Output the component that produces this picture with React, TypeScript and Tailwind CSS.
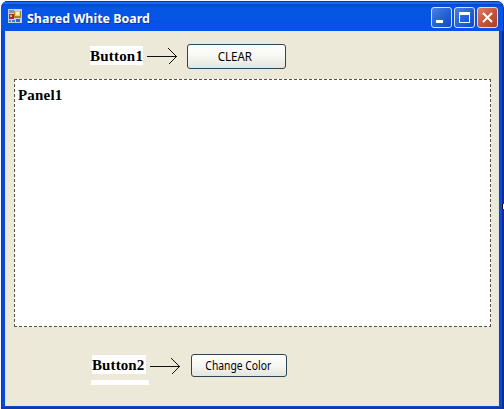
import React from "react";

function AppIcon() {
  return (
    <svg width="14" height="14" viewBox="0 0 14 14" shapeRendering="crispEdges" className="mt-[8px] ml-[4px] shrink-0">
      <rect width="14" height="14" fill="#c4cde2" />
      <rect x="1" y="1" width="5" height="3" fill="#8492ba" />
      <rect x="1" y="5" width="5" height="5" fill="#a52e2c" />
      <rect x="2" y="6" width="2" height="2" fill="#f0a58c" />
      <rect x="6" y="2" width="7" height="7" fill="#b78318" />
      <rect x="7" y="2" width="5" height="5" fill="#f9ce4b" />
      <rect x="8" y="3" width="3" height="3" fill="#fff0b4" />
      <rect x="1" y="11" width="2" height="2" fill="#557bc5" />
      <rect x="4" y="11" width="3" height="2" fill="#5276ba" />
      <rect x="8" y="10" width="4" height="3" fill="#3668c5" />
    </svg>
  );
}

function Caption({ close = false, children }: { close?: boolean; children: React.ReactNode }) {
  return (
    <button
      className={
        "flex h-[21px] w-[21px] shrink-0 items-center justify-center rounded-[3px] border border-[#d5e0fb] " +
        (close
          ? "bg-linear-to-br from-[#dc8068] via-[#c95439] to-[#ad3f25]"
          : "bg-linear-to-br from-[#4c7fe4] via-[#2463d8] to-[#1748c5]")
      }
    >
      <svg width="19" height="19" viewBox="0 0 19 19" fill="none" stroke="#fff">
        {children}
      </svg>
    </button>
  );
}

function Arrow() {
  return (
    <svg width="31" height="18" viewBox="0 0 31 18" fill="none" stroke="#111" shapeRendering="crispEdges">
      <path d="M0 9.5H30M21.5 1.5L29.5 9.5L21.5 17.5" />
    </svg>
  );
}

export default function App() {
  return (
    <div className="relative h-[409px] w-[504px] overflow-hidden bg-[#f8faff] pt-px pl-px">
      <div className="flex h-[408px] w-[502px] flex-col overflow-hidden rounded-t-[7px] bg-[#0a49d2] shadow-[1px_0_0_#0b2f9a]">
        <header className="flex h-[30px] shrink-0 bg-linear-to-b from-[#063fc0] from-0% via-[#0656e5] via-25% to-[#0552e5] pl-[3px] shadow-[inset_0_1px_0_#0838a5,inset_0_3px_0_#196bed]">
          <AppIcon />
          <h1 className="mt-[7px] ml-[5px] w-[300px] origin-left scale-x-[0.958] font-['Noto_Sans',sans-serif] text-[13px] leading-[20px] font-bold whitespace-nowrap text-white [text-shadow:1px_1px_0_#073394]">
            Shared White Board
          </h1>
          <div className="mt-[6px] mr-[5px] ml-auto flex gap-[2px]">
            <Caption>
              <path d="M4 13.5H11" strokeWidth="3" />
            </Caption>
            <Caption>
              <path d="M4.5 4V14.5H14.5V4" />
              <path d="M4 5.5H15" strokeWidth="3" />
            </Caption>
            <Caption close>
              <path d="M5 5L14 14M14 5L5 14" strokeWidth="2" />
            </Caption>
          </div>
        </header>
        <div className="flex h-[378px] border-x border-b-2 border-l-[#0b3cb8] border-r-[#0b2f9a] border-b-[#1238a8] px-[3px]">
          <main className="h-[375px] w-[494px] overflow-hidden bg-[#ece9d8] shadow-[inset_-1px_-1px_0_#dce4e6,inset_1px_0_0_#dce4e6]">
            <div className="flex h-[48px] pl-[85px]">
              <div className="mt-[15px] h-[19px] w-[53px] bg-white font-['Liberation_Serif',serif] text-[15px] leading-[20px] font-bold tracking-[0.2px] whitespace-nowrap text-black">
                Button1
              </div>
              <div className="mt-[16px] ml-[4px] w-[31px]">
                <Arrow />
              </div>
              <button className="mt-[13px] ml-[9px] flex h-[25px] w-[99px] items-center justify-center rounded-[3px] border border-[#294659] bg-linear-to-b from-white via-[#f6f6f2] to-[#e5e5df] font-['Noto_Sans',sans-serif] text-[12px] text-black">
                <span className="mr-[3px] inline-block scale-x-[0.96]">CLEAR</span>
              </button>
            </div>
            <section className="ml-[9px] h-[248px] w-[477px] bg-white bg-[repeating-linear-gradient(90deg,#555044_0_3px,transparent_3px_5px),repeating-linear-gradient(90deg,#555044_0_3px,transparent_3px_5px),repeating-linear-gradient(0deg,#555044_0_3px,transparent_3px_5px),repeating-linear-gradient(0deg,#555044_0_3px,transparent_3px_5px)] bg-[length:100%_1px,100%_1px,1px_100%,1px_100%] bg-[position:top,bottom,left,right] bg-no-repeat pt-[7px] pl-[4px] font-['Liberation_Serif',serif] text-[15px] leading-[19px] font-bold tracking-[0.2px] text-black">
              Panel1
            </section>
            <div className="flex h-[79px] pl-[86px]">
              <div className="mt-[28px] w-[58px]">
                <div className="ml-px h-[19px] w-[54px] bg-white font-['Liberation_Serif',serif] text-[15px] leading-[20px] font-bold tracking-[0.1px] whitespace-nowrap text-black">
                  Button2
                </div>
                <div className="mt-[6px] h-[5px] bg-white" />
              </div>
              <div className="mt-[30px] ml-px w-[31px]">
                <Arrow />
              </div>
              <button className="mt-[27px] ml-[10px] flex h-[23px] w-[96px] items-center justify-center rounded-[3px] border border-[#294659] bg-linear-to-b from-white via-[#f6f6f2] to-[#e5e5df] font-['Noto_Sans',sans-serif] text-[12px] whitespace-nowrap text-black">
                <span className="mr-px inline-block scale-x-[0.86]">Change Color</span>
              </button>
            </div>
          </main>
        </div>
      </div>
      <div className="absolute top-[204px] right-0 h-[5px] w-[2px] border-l border-black bg-white" />
    </div>
  );
}
